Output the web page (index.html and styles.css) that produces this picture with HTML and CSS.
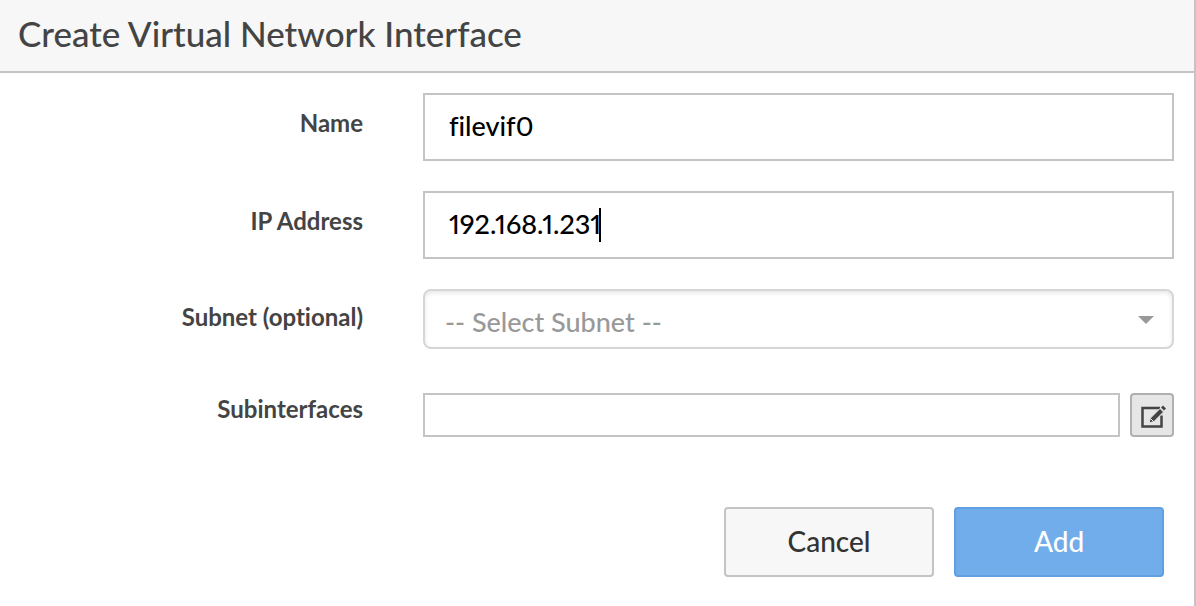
FILE: index.html
```html
<!DOCTYPE html>
<html lang="en">
<head>
<meta charset="utf-8">
<title>Create Virtual Network Interface</title>
<link rel="stylesheet" href="styles.css">
</head>
<body>
<main class="dialog">
  <header class="dialog-header">
    <h1 class="dialog-title">Create Virtual Network Interface</h1>
  </header>
  <form class="form">
    <div class="row">
      <label class="label" for="name">Name</label>
      <input class="text-input" id="name" type="text" value="filevif0">
    </div>
    <div class="row">
      <label class="label" for="ip">IP Address</label>
      <div class="caret-field">
        <input class="text-input" id="ip" type="text" value="192.168.1.231">
        <span class="caret"></span>
      </div>
    </div>
    <div class="row row-select">
      <label class="label" for="subnet">Subnet (optional)</label>
      <div class="select-field">
        <select class="select" id="subnet">
          <option>-- Select Subnet --</option>
        </select>
        <svg class="arrow" viewBox="0 0 16 8" aria-hidden="true"><path d="M0 0h16L8 8z" fill="#999"/></svg>
      </div>
    </div>
    <div class="row row-small">
      <label class="label" for="subinterfaces">Subinterfaces</label>
      <div class="edit-field">
        <input class="text-input text-input-small" id="subinterfaces" type="text">
        <button class="edit-button" type="button" aria-label="Edit subinterfaces">
          <svg class="edit-icon" viewBox="0 0 28 28" aria-hidden="true">
            <path d="M22 7H4.500V25.500H23.500V14.500" fill="none" stroke="#444" stroke-width="2.500"/>
            <path d="M11 22l1.500-5L22 7.500l3.500 3.500L16 20.500z" fill="#444" stroke="#e6e6e6" stroke-width="1"/>
            <path d="M23 6.500l2-2 3 3-2 2z" fill="#444"/>
            <path d="M13 18l2 2" stroke="#e6e6e6" stroke-width="1"/>
          </svg>
        </button>
      </div>
    </div>
    <div class="actions">
      <button class="button" type="button">Cancel</button>
      <button class="button button-primary" type="submit">Add</button>
    </div>
  </form>
</main>
</body>
</html>
```

FILE: styles.css
```css
* {
  box-sizing: border-box;
}

body {
  margin: 0;
  background: #fff;
  color: #444;
  font-family: Lato, "Open Sans", sans-serif;
  font-weight: 500;
  font-variant-ligatures: none;
  font-variant-numeric: proportional-nums;
}

input,
select,
button {
  margin: 0;
  font-family: inherit;
  font-weight: inherit;
  font-variant: inherit;
  outline: none;
}

.dialog {
  min-height: 100vh;
  border-right: 2px solid #c4c4c4;
}

.dialog-header {
  padding: 11px 18px 16px;
  background: #f7f7f7;
  border-bottom: 2px solid #c4c4c4;
}

.dialog-title {
  margin: 0;
  font-size: 35px;
  font-weight: 500;
  line-height: 44px;
}

.form {
  padding: 20px 20px 28px 0;
}

.row {
  display: grid;
  grid-template-columns: 363px minmax(0, 1fr);
  column-gap: 60px;
  align-items: start;
  margin-bottom: 30px;
}

.row-select {
  margin-bottom: 44px;
}

.row-small {
  margin-bottom: 70px;
}

.label {
  padding-top: 16px;
  font-size: 24px;
  font-weight: 700;
  line-height: 28px;
  text-align: right;
}

.row-select .label {
  padding-top: 14px;
}

.row-small .label {
  padding-top: 2px;
}

.text-input {
  display: block;
  width: 100%;
  height: 68px;
  padding: 0 24px 4px;
  border: 2px solid #c4c4c4;
  border-radius: 0;
  background: #fff;
  color: #000;
  font-size: 27px;
}

.text-input-small {
  flex: 1;
  min-width: 0;
  height: 44px;
}

.caret-field,
.select-field {
  position: relative;
}

.caret {
  position: absolute;
  top: 17px;
  left: 176px;
  width: 2px;
  height: 34px;
  background: #000;
}

.select {
  display: block;
  width: 100%;
  height: 60px;
  padding: 4px 48px 0 20px;
  border: 2px solid #d6d6d6;
  border-radius: 8px;
  background: #fff;
  box-shadow: inset 0 2px 4px rgba(0, 0, 0, 0.1);
  color: #999;
  font-size: 27px;
  appearance: none;
}

.arrow {
  position: absolute;
  top: 27px;
  right: 20px;
  width: 16px;
  height: 8px;
  pointer-events: none;
}

.edit-field {
  display: flex;
  gap: 10px;
}

.edit-button {
  display: flex;
  align-items: center;
  justify-content: center;
  width: 44px;
  height: 44px;
  padding: 0;
  border: 2px solid #b0b0b0;
  border-radius: 4px;
  background: #e6e6e6;
}

.edit-icon {
  width: 28px;
  height: 28px;
}

.actions {
  display: flex;
  justify-content: flex-end;
  gap: 20px;
  padding-right: 10px;
}

.button {
  width: 210px;
  height: 70px;
  padding: 0 0 2px;
  border: 2px solid #c4c4c4;
  border-radius: 4px;
  background: #f7f7f7;
  color: #333;
  font-size: 28px;
}

.button-primary {
  border-color: #5f9fe2;
  background: #70adea;
  color: #fff;
}
```
